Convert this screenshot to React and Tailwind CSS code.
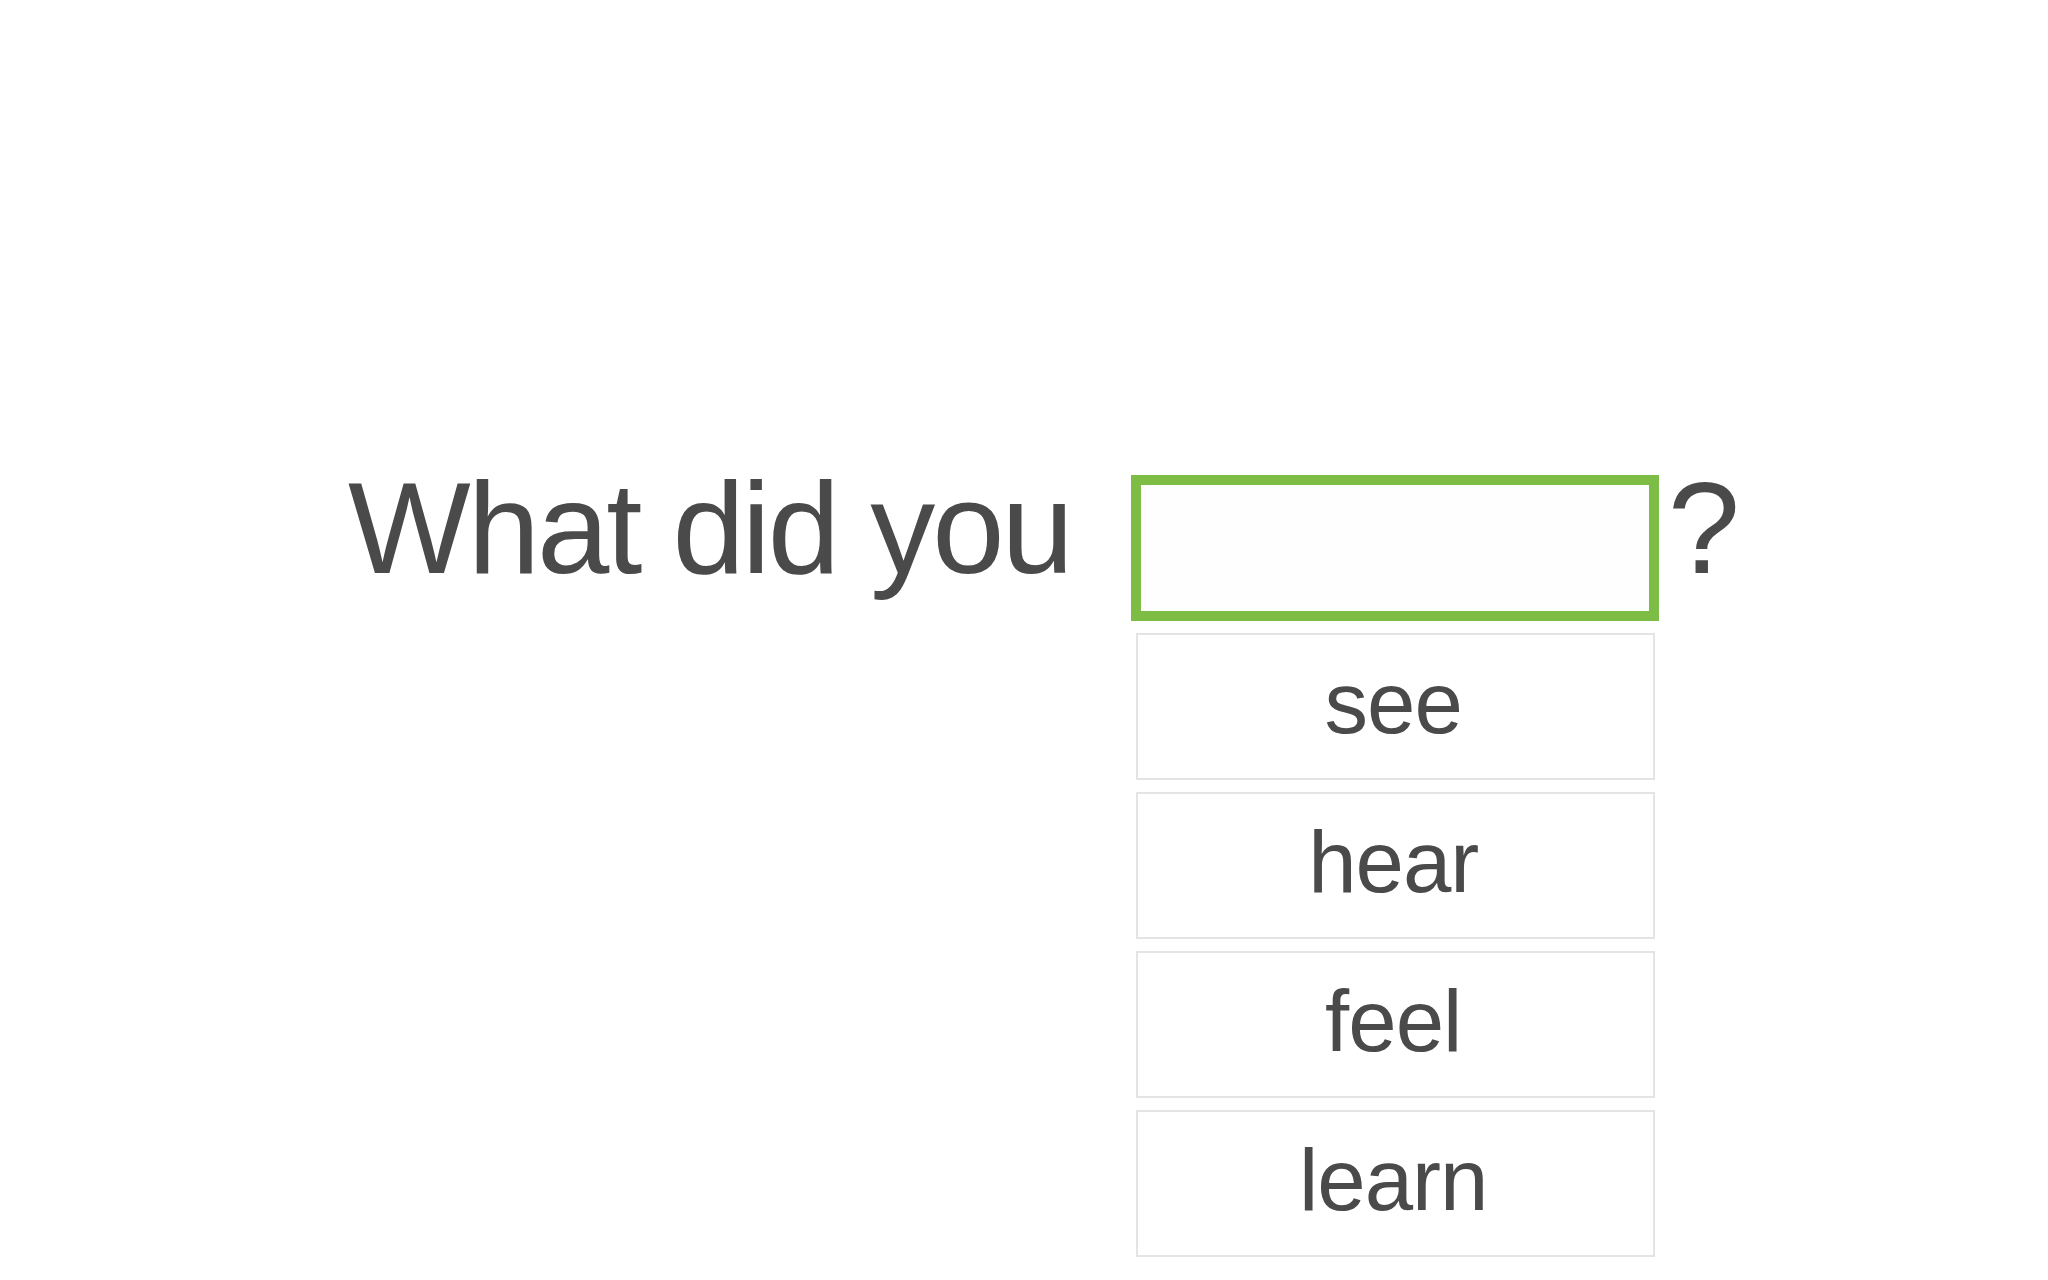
export default function App() {
  const options = ["see", "hear", "feel", "learn"];

  return (
    <div className="min-h-screen bg-white text-[#4a4a4a] font-['Liberation_Sans',Arial,sans-serif]">
      <div className="flex items-start pt-[475px] pl-[348px]">
        <span className="text-[130px] leading-none tracking-[-3px] -mt-3 whitespace-nowrap">
          What did you
        </span>

        <div className="ml-[60px] flex flex-col">
          <div className="w-[528px] h-[146px] border-[10px] border-[#7dbd45] bg-[#fefefe]" />
          <div className="mt-3 ml-[5px] w-[519px] flex flex-col gap-3">
            {options.map((word) => (
              <button
                key={word}
                className="h-[147px] border-2 border-[#e4e4e4] bg-white flex items-center justify-center pb-[9px] pr-[4px] text-[87px] leading-none tracking-[-1px] text-[#4a4a4a]"
              >
                {word}
              </button>
            ))}
          </div>
        </div>

        <span className="ml-[9px] text-[130px] leading-none -mt-3">?</span>
      </div>
    </div>
  );
}
